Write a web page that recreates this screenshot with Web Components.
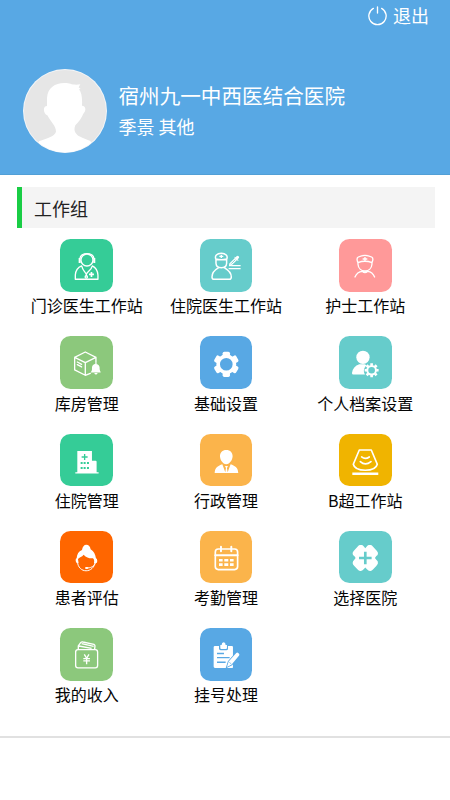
<!DOCTYPE html>
<html lang="zh-CN">
<head>
<meta charset="utf-8">
<title>工作组</title>
<style>
html,body{margin:0;padding:0;background:#fff}
body{width:450px;height:800px;overflow:hidden;font-family:"Noto Sans CJK SC","Noto Sans",sans-serif}
</style>
</head>
<body>
<work-app></work-app>
<script>
const GLYPHS = {
doctor:`<g fill="none" stroke="#fff" stroke-width="4" stroke-linecap="round" stroke-linejoin="round"><circle cx="81" cy="63" r="18"/><path d="M60 70V59C61 39 101 39 102 59V70M65 81C53 86 47 96 46 108V121H114V108C113 96 107 86 97 81M66 83C68 94 75 97 79 106V110M96 83C94 94 82 97 79 106"/><circle cx="79" cy="114" r="3.5"/></g><path d="M56 57h5v15h-5zM101 57h5v15h-5zM92 99h5v5h5v5h-5v5h-5v-5h-5v-5h5z" fill="#fff"/>`,
inpatient:`<g fill="none" stroke="#fff" stroke-width="4.500" stroke-linecap="round" stroke-linejoin="round"><path d="M48 61C43 51 51 43 64 43S85 51 80 61M48 60Q64 65 80 60V73C79 91 49 91 48 73ZM55 87C43 94 36 103 36 114Q36 121 42 121H88Q94 121 94 114C94 103 86 94 74 87"/></g><path d="M94 80H122M86 89H122" stroke="#fff" stroke-width="4"/><path d="M58 50h12v4H58zM62 47h4v10h-4z" fill="#fff"/><path d="M92 76L108 60" stroke="#fff" stroke-width="9"/><path d="M110 58L113 55" stroke="#fff" stroke-width="9" stroke-linecap="round"/><path d="M87 82L88 72L97 81ZM105 53L116 64L114 66L103 55Z" fill="#fff"/><path d="M94 74L106 62" stroke="#66cccb" stroke-width="2.500"/>`,
nurse:`<g fill="none" stroke="#fff" stroke-width="4" stroke-linecap="round" stroke-linejoin="round"><path d="M57 71C53 62 54 56 58 54C70 48 86 48 98 54C102 56 103 62 99 71C86 66 70 66 57 71ZM57 71V76C59 103 97 103 99 76V71M48 114C52 104 61 98 70 97C75 102 81 102 86 97C95 98 103 104 107 114"/></g><path d="M76 54h4v4h5v4h-5v4h-4v-4h-5v-4h5z" fill="#fff"/>`,
stock:`<g fill="none" stroke="#fff" stroke-width="4" stroke-linecap="round" stroke-linejoin="round"><path d="M108 79V64L76 48L44 64V102L76 118L91 112M44 64L76 80L108 64M76 80V118M52 78L65 85M52 86L65 93"/></g><path d="M93 108c4-4 3-8 3-13q1-11 11-12 11 1 12 12c0 5 0 9 3 13v2H93zM103 111h10q-1 5-5 5-4 0-5-5zM106 80h4v5h-4z" fill="#fff"/>`,
gear:`<g transform="translate(79 85)" fill="#fff"><circle r="24.500" fill="none" stroke="#fff" stroke-width="11"/><rect x="-11" y="-38" width="22" height="16" rx="5"/><rect x="-11" y="-38" width="22" height="16" rx="5" transform="rotate(60)"/><rect x="-11" y="-38" width="22" height="16" rx="5" transform="rotate(120)"/><rect x="-11" y="-38" width="22" height="16" rx="5" transform="rotate(180)"/><rect x="-11" y="-38" width="22" height="16" rx="5" transform="rotate(240)"/><rect x="-11" y="-38" width="22" height="16" rx="5" transform="rotate(300)"/></g>`,
profile:`<circle cx="72" cy="64" r="20" fill="#fff"/><path fill="#fff" d="M61 85H77L83 88Q73 97 75 109L78 116H43Q39 116 39 111Q42 91 61 85Z"/><g transform="translate(98 103)"><circle r="13" fill="none" stroke="#fff" stroke-width="6"/><path d="M0-21V-14M0 14V21M-21 0H-14M14 0H21M-15-15L-10-10M15-15L10-10M-15 15L-10 10M15 15L10 10" stroke="#fff" stroke-width="8"/></g>`,
hospital:`<path fill="#fff" fill-rule="evenodd" d="M52 51H96V80H107Q110 80 110 83V115H116V119H46V115H52ZM72 60V67H65V71H72V78H76V71H83V67H76V60ZM62 84V90H68V84ZM71 84V90H77V84ZM81 84V90H87V84ZM62 99V105H68V99ZM71 99V105H77V99ZM81 99V105H87V99Z"/>`,
admin:`<path fill="#fff" d="M79 48C91 48 98 56 98 67C97 79 90 90 79 91C68 90 61 79 60 67C60 56 67 48 79 48ZM67 91L76 115L78 102L75 96H84L81 102L83 115L92 91C104 96 114 99 115 117H44C45 99 55 96 67 91Z"/>`,
ultrasound:`<g fill="none" stroke="#fff" stroke-width="5" stroke-linecap="round" stroke-linejoin="round"><path d="M61 48H97L115 91C112 104 99 109 79 109S46 104 43 91Z"/><path d="M64 83Q79 97 96 83M68 69Q79 78 91 69"/></g><path d="M40 116h78v7H40z" fill="#fff"/>`,
service:`<path fill="#fff" d="M66 57C68 47 72 41 79 41S91 47 92 55C102 61 106 70 108 82Q112 83 112 90T107 97L102 97C104 89 102 84 99 82C89 83 79 80 71 71C66 78 58 78 54 84L56 97L51 97Q47 94 47 88T50 82C51 69 56 61 66 57Z"/><path d="M52 91C55 129 101 129 107 91M105 97C101 108 91 111 80 111" fill="none" stroke="#fff" stroke-width="3"/><ellipse cx="80" cy="111" rx="5" ry="3" fill="#fff"/>`,
calendar:`<rect x="46" y="54" width="67" height="62" rx="9" fill="none" stroke="#fff" stroke-width="5"/><path d="M46 73H113M63 47V61M94 47V61" stroke="#fff" stroke-width="6" stroke-linecap="round"/><path fill="#fff" d="M57 84h11v8H57zM73 84h12v8H73zM90 84h11v8H90zM57 97h11v8H57zM73 97h12v8H73zM90 97h11v8H90z"/>`,
clinic:`<path fill="#fff" d="M63 42H68Q71 42 74 46L79 52L84 46Q87 42 90 42H95Q98 42 101 46L114 60Q118 64 117 69Q116 73 112 75L108 81L112 86Q118 90 117 97Q116 101 112 105L102 116Q98 121 93 120Q88 120 84 115L79 110L74 115Q70 120 65 120Q60 121 56 116L46 105Q41 100 41 96Q41 90 46 86L50 81L46 75Q42 73 41 69Q40 64 44 60L57 46Q60 42 63 42Z"/><path d="M79 62V100M60 81H98" stroke="#66cccb" stroke-width="8"/>`,
wallet:`<g fill="none" stroke="#fff" stroke-width="4" stroke-linejoin="round"><rect x="47" y="65" width="66" height="55" rx="7"/><path d="M55 65V54L62 44Q65 41 69 42L102 49Q106 51 105 55L104 64M57 54L95 61M65 47L101 55"/></g><path d="M73 79L80 91L87 79M70 92H90M70 99H90M80 91V109" fill="none" stroke="#fff" stroke-width="4"/>`,
clipboard:`<path fill="#fff" fill-rule="evenodd" d="M45 54H57V62Q58 67 63 67H79Q84 67 84 62V54H96Q99 54 99 57V118Q99 120 97 120H45Q41 120 41 116V58Q41 54 45 54ZM51 74V79H72V74ZM51 87V91H89V87ZM51 101V105H77V101Z"/><path d="M61 51H65Q65 43 71 43T77 51H81V60Q81 63 78 63H64Q61 63 61 60Z" fill="#fff"/><path d="M109 75Q112 72 115 75L117 77Q120 80 117 83L95 110L81 117L86 101Z" fill="#fff" stroke="#58a8e4" stroke-width="5" paint-order="stroke"/><path d="M88 103L94 108" stroke="#58a8e4" stroke-width="2"/>`
};

class AppIcon extends HTMLElement{
  constructor(){
    super();
    this.attachShadow({mode:'open'}).innerHTML=`<style>
:host{display:block;width:52.6px;height:52.6px;border-radius:10.5px;overflow:hidden;background:var(--tile)}
svg{display:block;width:100%;height:100%}
</style><svg viewBox="0 0 158 158" aria-hidden="true">${GLYPHS[this.getAttribute('name')]||''}</svg>`;
  }
}
customElements.define('app-icon',AppIcon);

class WorkTile extends HTMLElement{
  constructor(){
    super();
    this.attachShadow({mode:'open'}).innerHTML=`<style>
:host{display:flex;flex-direction:column;align-items:center;gap:1.7px;height:97.2px}
.label{font-size:16px;line-height:24px;color:#050505;white-space:nowrap}
</style><app-icon name="${this.getAttribute('icon')}"></app-icon><div class="label"><slot></slot></div>`;
  }
}
customElements.define('work-tile',WorkTile);

class UserAvatar extends HTMLElement{
  constructor(){
    super();
    this.attachShadow({mode:'open'}).innerHTML=`<style>
:host{display:block;width:84px;height:84px;flex:none}
svg{display:block}
</style><svg width="84" height="84" viewBox="0 0 252 252"><defs><clipPath id="c"><circle cx="126" cy="126" r="124"/></clipPath></defs><circle cx="126" cy="126" r="126" fill="#f4f6f8"/><circle cx="126" cy="126" r="123" fill="#e6e6e6"/><path clip-path="url(#c)" fill="#fff" d="M72 111V87C74 55 98 41 126 42C139 42 145 47 160 47L172 46L167 55L173 60L168 61C177 72 178 91 177 110C188 110 191 124 181 134C176 147 168 157 157 169C151 183 155 198 178 206L202 216L220 260H30L48 217C72 207 94 203 99 188C99 171 83 158 73 139C60 133 59 111 72 111Z"/></svg>`;
  }
}
customElements.define('user-avatar',UserAvatar);

class ProfileHeader extends HTMLElement{
  constructor(){
    super();
    this.attachShadow({mode:'open'}).innerHTML=`<style>
:host{display:flex;flex-direction:column;box-sizing:border-box;height:175px;background:#58a8e4;color:#fff;border-bottom:1px solid #519fd6}
.exit{display:flex;align-items:center;justify-content:flex-end;gap:6px;height:32px;padding-right:21px;font-size:18px;line-height:28px}
.exit slot{display:block;padding-bottom:2px}
.exit svg{width:19px;height:20px}
.user{display:flex;align-items:center;gap:11.5px;padding:36.5px 0 0 23px}
.text{padding-bottom:2px}
.hospital{font-size:20.6px;line-height:32px}
.name{font-size:18px;line-height:30px}
</style><div class="exit"><svg viewBox="0 0 57 60" fill="none" stroke="#fff" stroke-width="4" stroke-linecap="round"><path d="M28.500 3V21M16 7A26 26 0 1 0 41 7"/></svg><slot name="action"></slot></div>
<div class="user"><user-avatar></user-avatar><div class="text"><div class="hospital"><slot name="hospital"></slot></div><div class="name"><slot name="name"></slot></div></div></div>`;
  }
}
customElements.define('profile-header',ProfileHeader);

class GroupTitle extends HTMLElement{
  constructor(){
    super();
    this.attachShadow({mode:'open'}).innerHTML=`<style>
:host{display:flex;align-items:center;box-sizing:border-box;height:41.500px;margin:11.500px 15px 0 17px;padding:1px 0 0 12px;border-left:5px solid #19cd45;background:#f4f4f4;color:#222;font-size:18px;line-height:28px}
</style><slot></slot>`;
  }
}
customElements.define('group-title',GroupTitle);

class TileGrid extends HTMLElement{
  constructor(){
    super();
    this.attachShadow({mode:'open'}).innerHTML=`<style>
:host{display:grid;align-content:start;grid-template-columns:repeat(3,139.3px);padding:11.2px 0 0 17px;height:497px;border-bottom:2px solid #e1e1e1}
</style><slot></slot>`;
  }
}
customElements.define('tile-grid',TileGrid);

class WorkApp extends HTMLElement{
  constructor(){
    super();
    const tiles=[
['doctor','#35cc97','门诊医生工作站'],['inpatient','#66cccb','住院医生工作站'],['nurse','#ff9999','护士工作站'],
['stock','#8cc87c','库房管理'],['gear','#58a8e4','基础设置'],['profile','#66cccb','个人档案设置'],
['hospital','#35cc97','住院管理'],['admin','#fbb44b','行政管理'],['ultrasound','#f0b400','B超工作站'],
['service','#ff6600','患者评估'],['calendar','#fbb44b','考勤管理'],['clinic','#66cccb','选择医院'],
['wallet','#8cc87c','我的收入'],['clipboard','#58a8e4','挂号处理']];
    this.attachShadow({mode:'open'}).innerHTML=`<style>
:host{display:block;width:450px;height:800px;background:#fff;overflow:hidden}
</style><profile-header><span slot="action">退出</span><span slot="hospital">宿州九一中西医结合医院</span><span slot="name">季景 其他</span></profile-header>
<group-title>工作组</group-title>
<tile-grid>${tiles.map(([i,c,t])=>`<work-tile icon="${i}" style="--tile:${c}">${t}</work-tile>`).join('')}</tile-grid>`;
  }
}
customElements.define('work-app',WorkApp);
</script>
</body>
</html>
